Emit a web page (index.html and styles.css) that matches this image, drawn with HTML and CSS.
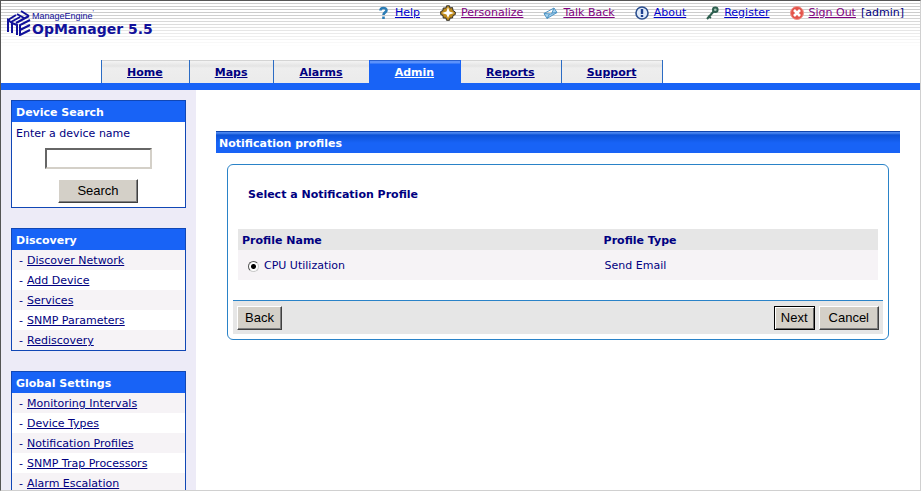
FILE: index.html
```html
<!DOCTYPE html>
<html lang="en">
<head>
  <meta charset="UTF-8">
  <title>OpManager 5.5</title>
  <link rel="stylesheet" href="styles.css">
</head>
<body>

<header class="header">
  <div class="logo">
    <svg class="logo-mark" width="24" height="26" viewBox="0 0 24 26" fill="none" stroke="#11119a" stroke-width="2">
      <path d="M1 10L9 5M4 12L13 7M9 13L22 6M10 4L17 8M14 1L22 6"/>
      <path d="M1 22V10L5 13V23M5 13L10 15V25"/>
      <path d="M23 10L13 15V25L23 20M13 20L23 15"/>
    </svg>
    <div class="logo-text">
      <span class="logo-company">ManageEngine<sup>'</sup></span>
      <span class="logo-product">OpManager 5.5</span>
    </div>
  </div>
  <nav class="user-links">
    <span class="user-item">
      <svg width="12" height="14" viewBox="0 0 12 14" fill="none" stroke="#2c7db5" stroke-width="2.6"><path d="M2.5 4.5C2.5 1.2 8.5 1.2 8.5 4.2C8.5 6.5 5.5 6.3 5.5 9M5.5 10.5V13"/></svg>
      <a class="new" href="#">Help</a>
    </span>
    <span class="user-item">
      <svg width="16" height="16" viewBox="0 0 16 16"><path d="M6.5 .8H9.5L10 3L12.5 2.5L13 5.5L15.3 7V9.5L13 10.5L12.5 13L10 13L9.5 15.3H6.5L6 13L3.2 13L3 10.5L.7 9.5V6.5L3 5.5L3.2 3L6 3Z" fill="#c08c1c" stroke="#33302a"/><path d="M8 2L9.5 6.5L14 8L9.5 9.5L8 13L6.5 9.5L2 8L6.5 6.5Z" fill="#fff"/></svg>
      <a href="#">Personalize</a>
    </span>
    <span class="user-item">
      <svg width="15" height="14" viewBox="0 0 15 14" fill="#a8d4f0" stroke="#4f94c4"><path d="M1 7.5L11 2L14 6.5L4 12.5ZM1 7.5L8.5 8L11 2M4 12.5L6.5 8M14 6.5L9 7"/></svg>
      <a href="#">Talk Back</a>
    </span>
    <span class="user-item">
      <svg width="14" height="14" viewBox="0 0 14 14"><circle cx="7" cy="7" r="6" fill="#e0ebfa" stroke="#2c4f8f" stroke-width="1.6"/><path d="M7 3V8M7 9V11" stroke="#1c3f8f" stroke-width="2.4"/></svg>
      <a class="new" href="#">About</a>
    </span>
    <span class="user-item">
      <svg width="13" height="14" viewBox="0 0 13 14" fill="none" stroke="#2f6050" stroke-width="2"><path d="M1 13L8 5M2 10L5 12"/><circle cx="9.3" cy="3.7" r="2.3" fill="#a5c8b8"/></svg>
      <a class="new" href="#">Register</a>
    </span>
    <span class="user-item">
      <svg width="14" height="14" viewBox="0 0 14 14"><circle cx="7" cy="7" r="6.5" fill="#e4544b" stroke="#f0948c"/><path d="M4 4L10 10M10 4L4 10" stroke="#fff" stroke-width="2.6"/></svg>
      <a href="#">Sign Out</a> [admin]
    </span>
  </nav>
</header>

<nav class="tabs">
  <a class="tab" href="#">Home</a>
  <a class="tab" href="#">Maps</a>
  <a class="tab" href="#">Alarms</a>
  <a class="tab active" href="#">Admin</a>
  <a class="tab" href="#">Reports</a>
  <a class="tab" href="#">Support</a>
</nav>

<div class="page">
  <aside class="sidebar">
    <form class="box">
      <h2>Device Search</h2>
      <div class="search">
        <label for="device">Enter a device name</label>
        <input type="text" id="device">
        <button type="button">Search</button>
      </div>
    </form>
    <div class="box">
      <h2>Discovery</h2>
      <ul>
        <li><a href="#">Discover Network</a></li>
        <li><a href="#">Add Device</a></li>
        <li><a href="#">Services</a></li>
        <li><a href="#">SNMP Parameters</a></li>
        <li><a href="#">Rediscovery</a></li>
      </ul>
    </div>
    <div class="box">
      <h2>Global Settings</h2>
      <ul>
        <li><a href="#">Monitoring Intervals</a></li>
        <li><a href="#">Device Types</a></li>
        <li><a href="#">Notification Profiles</a></li>
        <li><a href="#">SNMP Trap Processors</a></li>
        <li><a href="#">Alarm Escalation</a></li>
      </ul>
    </div>
  </aside>

  <main class="content">
    <h1>Notification profiles</h1>
    <form class="panel">
      <h3>Select a Notification Profile</h3>
      <table class="profiles">
        <thead>
          <tr><th class="name">Profile Name</th><th>Profile Type</th></tr>
        </thead>
        <tbody>
          <tr>
            <td><label class="choice"><input type="radio" name="profile" checked> CPU Utilization</label></td>
            <td>Send Email</td>
          </tr>
        </tbody>
      </table>
      <div class="actions">
        <button type="button">Back</button>
        <button type="button" class="default">Next</button>
        <button type="button" class="cancel">Cancel</button>
      </div>
    </form>
  </main>
</div>

</body>
</html>
```
FILE: styles.css
```css
* {
  box-sizing: border-box;
}

body {
  margin: 0;
  height: calc(100vh - 1px);
  display: flex;
  flex-direction: column;
  overflow: hidden;
  border-top: 1px solid #555;
  border-left: 1px solid #555;
  border-right: 1px solid #d0d0d0;
  border-bottom: 1px solid #d0d0d0;
  background: #fff;
  color: #000080;
  font-family: Verdana, "DejaVu Sans", sans-serif;
  font-size: 11px;
  line-height: 14px;
}

html {
  background: #fff;
}

a {
  color: #000080;
}

h1, h2, h3, ul {
  margin: 0;
  padding: 0;
  font-size: 11px;
}

/* header */
.header {
  display: flex;
  justify-content: space-between;
  align-items: flex-start;
  height: 59px;
  padding: 4px 16px 0 6px;
  background: linear-gradient(rgba(255, 255, 255, 0) 12px, #fff 46px),
    repeating-linear-gradient(#fff 0 2px, #ccc 2px 3px);
}

.logo {
  display: flex;
  gap: 1px;
  padding-top: 5px;
}

.logo-text {
  display: flex;
  flex-direction: column;
  color: #11119a;
  font-family: Arial, "Liberation Sans", sans-serif;
}

.logo-company {
  font-size: 9px;
  line-height: 12px;
}

.logo-company sup {
  font-size: 7px;
  line-height: 0;
}

.logo-product {
  font-family: "Arial Black", "DejaVu Sans", sans-serif;
  font-size: 14px;
  font-weight: 900;
  line-height: 14px;
}

.user-links {
  display: flex;
  gap: 20px;
}

.user-item {
  display: flex;
  align-items: center;
  gap: 5px;
  height: 16px;
}

.user-item a {
  color: #800080;
}

.user-item a.new {
  color: #0000cc;
}

/* tabs */
.tabs {
  display: flex;
  padding-left: 100px;
  border-bottom: 7px solid #1863f6;
}

.tab {
  padding: 6px 26px 3px 25px;
  border-left: 1px solid #2b6cc4;
  background: linear-gradient(#d4d4d4 1px, #f4f4f4 1px, #e4e4e4 6px, #eee 8px, #ebebeb);
  font-weight: bold;
}

.tab:last-child {
  border-right: 1px solid #2b6cc4;
}

.tab.active {
  border-left-color: #1863f6;
  background: linear-gradient(#2b62d0 1px, #5c92fb 1px, #5c92fb 3px, #1863f6 4px);
  color: #fff;
}

.active + .tab {
  border-left-color: #1863f6;
}

/* sidebar */
.page {
  display: flex;
  flex: 1;
  min-height: 0;
}

.sidebar {
  flex: none;
  width: 195px;
  padding: 10px;
  background: #edebf7;
  overflow: hidden;
}

.box {
  margin-bottom: 20px;
  border: 1px solid #1147b5;
  background: #fff;
}

.box h2 {
  padding: 5px 4px 2px;
  background: #1863f6;
  color: #fff;
}

.search {
  display: flex;
  flex-direction: column;
  align-items: center;
  padding: 5px 5px 4px 4px;
}

.search label {
  align-self: flex-start;
}

.search input {
  width: 107px;
  height: 21px;
  margin: 7px 0 10px;
  border: 2px solid;
  border-color: #666 #d4d0c8 #d4d0c8 #666;
}

.search button {
  width: 80px;
}

.box li {
  display: flex;
  gap: 4px;
  padding: 4px 7px 2px;
}

.box li::before {
  content: "-";
}

.box li:nth-child(odd) {
  background: #f6f3f6;
}

button {
  height: 24px;
  padding: 0 7px 2px;
  border: 1px solid;
  border-color: #fff #404040 #404040 #fff;
  box-shadow: inset -1px -1px #808080;
  background: #d4d0c8;
  color: #000;
  font-family: Arial, "Liberation Sans", sans-serif;
  font-size: 13px;
}

/* content */
.content {
  flex: 1;
  padding: 41px 20px 0;
}

.content h1 {
  padding: 6px 3px 2px;
  background: linear-gradient(#1146ae 1px, #4a86f0 1px, #4a86f0 2px, #0c52d6 4px, #1863f6 12px);
  color: #fff;
}

.panel {
  margin: 11px 11px 0;
  padding: 23px 5px 5px;
  border: 1px solid #2a83c8;
  border-radius: 6px;
}

.panel h3 {
  margin: 0 15px 27px;
}

.profiles {
  width: calc(100% - 10px);
  margin: 0 5px;
  border-collapse: collapse;
}

.profiles th {
  height: 21px;
  padding: 2px 4px 0;
  background: #e6e6e6;
  text-align: left;
}

.profiles .name {
  width: 56.5%;
}

.profiles td {
  height: 30px;
  padding: 2px 5px 0;
  background: #f6f3f6;
}

.choice {
  display: flex;
  align-items: center;
  gap: 5px;
  padding-left: 5px;
}

.choice input {
  appearance: none;
  width: 11px;
  height: 11px;
  margin: 0;
  border: 1px solid;
  border-color: #555 #ccc #ccc #555;
  border-radius: 50%;
  background: radial-gradient(#000 2px, #fff 3px);
}

.actions {
  display: flex;
  gap: 4px;
  margin-top: 20px;
  padding: 5px 4px 4px;
  border-top: 1px solid #2a83c8;
  background: #e6e6e6;
}

.actions .default {
  margin-left: auto;
  padding: 0 6px 2px;
  border-color: #000;
  box-shadow: inset 1px 1px #fff, inset -1px -1px #666;
}

.actions .cancel {
  padding: 0 9px 2px;
}
```
